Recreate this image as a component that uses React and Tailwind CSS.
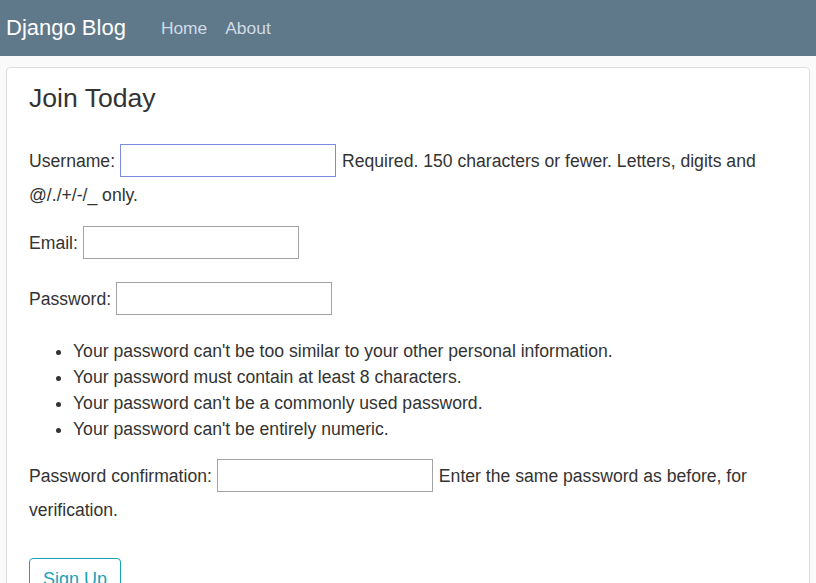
import React from 'react';

const passwordRules = [
    "Your password can't be too similar to your other personal information.",
    'Your password must contain at least 8 characters.',
    "Your password can't be a commonly used password.",
    "Your password can't be entirely numeric.",
];

const Field = ({ label, focused, children }) => (
    <div className="flex items-center h-[33px] gap-[5px] whitespace-nowrap">
        <span>{label}</span>
        <input
            type="text"
            className={`w-[216px] h-[33px] bg-white border outline-none ${focused ? 'border-[#7c8ce4]' : 'border-[#a3a3a3]'}`}
        />
        {children && <span className="ml-[1px]">{children}</span>}
    </div>
);

const App = () => {
    return (
        <div className="min-h-[583px] bg-[#fafafa] text-[#333] font-['Liberation_Sans',Arial,sans-serif] text-[17.6px] leading-[26px]">
            <nav className="h-[56px] bg-[#5f788a] flex items-center px-[6px]">
                <span className="text-white text-[22px]">Django Blog</span>
                <span className="ml-[35px] text-[#cfdbe6] text-[17.4px]">Home</span>
                <span className="ml-[18px] text-[#cfdbe6] text-[17.4px]">About</span>
            </nav>

            <div className="mt-[11px] mx-[6px] bg-white border border-[#dddddd] rounded-[4px] pt-[10px] px-[22px] pb-[20px]">
                <h1 className="text-[26.6px] leading-[40px]">Join Today</h1>

                <div className="mt-[26px]">
                    <Field label="Username:" focused>
                        Required. 150 characters or fewer. Letters, digits and
                    </Field>
                    <p className="mt-[5px]">@/./+/-/_ only.</p>
                </div>

                <div className="mt-[18px]">
                    <Field label="Email:" />
                </div>

                <div className="mt-[23px]">
                    <Field label="Password:" />
                </div>

                <ul className="mt-[23px] pl-[44px] list-disc">
                    {passwordRules.map((rule) => (
                        <li key={rule}>{rule}</li>
                    ))}
                </ul>

                <div className="mt-[17px]">
                    <Field label="Password confirmation:">
                        Enter the same password as before, for
                    </Field>
                    <p className="mt-[5px]">verification.</p>
                </div>

                <button className="mt-[35px] h-[42px] px-[13px] border border-[#17a2b8] text-[#17a2b8] rounded-[4px] text-[18px]">
                    Sign Up
                </button>
            </div>
        </div>
    );
};

export default App;
